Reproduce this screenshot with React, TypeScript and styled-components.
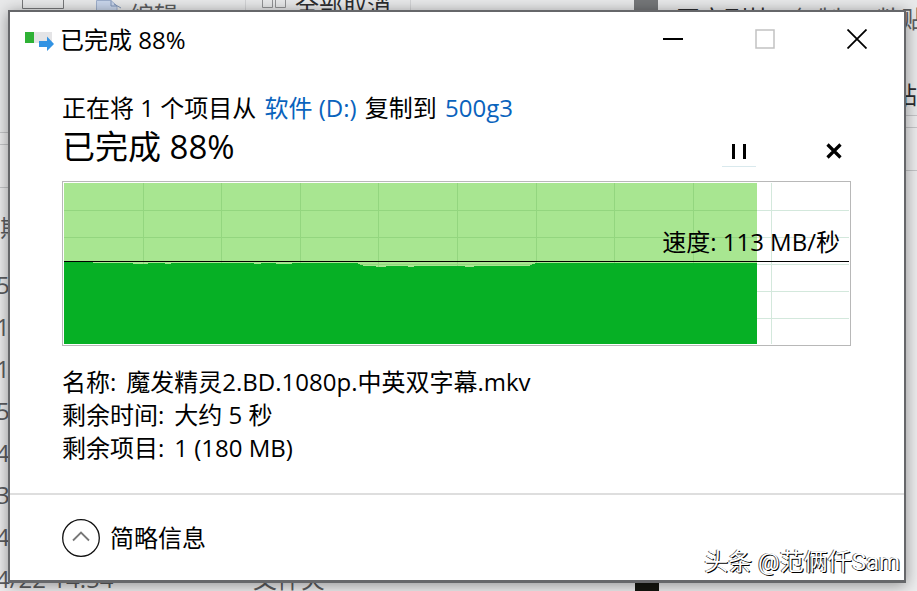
import React from "react";
import styled, { createGlobalStyle } from "styled-components";

const GlobalStyle = createGlobalStyle`
  * { box-sizing: border-box; }
  body {
    margin: 0;
    background: #ececed;
    color: #000;
    font-family: "Open Sans", "Noto Sans CJK SC", sans-serif;
    font-size: 24px;
    line-height: 33px;
  }
`;

const Desktop = styled.div`
  position: relative;
  display: flex;
  min-height: 100vh;
  padding: 10px 11px 8px 8px;
  overflow: hidden;
`;

/* Explorer windows behind the dialog */
const Backdrop = styled.div`
  position: absolute;
  inset: 0;
  display: grid;
  grid-template-columns: 659fr 258fr;
  overflow: hidden;
  color: #5c5d60;
  white-space: nowrap;
`;

const Pane = styled.div`
  display: flex;
  flex-direction: column;
  min-width: 0;
  overflow: hidden;
`;

const Ribbon = styled.div<{ $height: number }>`
  flex: none;
  height: ${(p) => p.$height}px;
  background: #e8e9ea;
  border-bottom: 1px solid #c4c5c7;
  overflow: hidden;
`;

const RibbonRow = styled.div<{ $height?: number }>`
  display: flex;
  align-items: flex-start;
  height: ${(p) => p.$height ?? 78}px;
`;

const Strip = styled.div<{ $height: number }>`
  flex: none;
  height: ${(p) => p.$height}px;
  border-bottom: 1px solid #c4c5c7;
`;

const RibbonGroup = styled.div<{ $start: number; $lift?: number; $dark?: boolean }>`
  display: flex;
  flex: none;
  align-items: flex-start;
  gap: 8px;
  padding-left: ${(p) => p.$start}px;
  margin-top: ${(p) => p.$lift ?? 0}px;
  color: ${(p) => (p.$dark ? "#2c2d2f" : "#5c5d60")};
`;

const RibbonDivider = styled.div<{ $gap: number }>`
  flex: none;
  width: 1px;
  height: 100%;
  margin-left: ${(p) => p.$gap}px;
  background: #d2d3d5;
`;

const RibbonIcon = styled.svg`
  display: block;
  flex: none;
`;

const Files = styled.div`
  display: flex;
  flex-direction: column;
  padding-top: 21px;
`;

const FileRow = styled.div`
  display: grid;
  grid-template-columns: 253fr 382fr 24fr;
  height: 42px;
  line-height: 42px;
`;

const FileDate = styled.span`
  margin-left: -4px;
`;

const ColumnHead = styled.div`
  height: 55px;
  line-height: 38px;
`;

const Thumb = styled.div<{ $dark?: boolean }>`
  width: 24px;
  height: 42px;
  background: ${(p) => (p.$dark ? "#14150f" : "#757779")};
`;

/* Copy dialog */
const Dialog = styled.section`
  position: relative;
  display: flex;
  flex: 1;
  flex-direction: column;
  min-width: 0;
  background: #fff;
  border: 2px solid #66676a;
  border-bottom-width: 3px;
  box-shadow: 0 2px 14px rgba(0, 0, 0, 0.4);
`;

const TitleBar = styled.header`
  display: flex;
  align-items: center;
  height: 54px;
  padding: 0 1px 0 14px;
`;

const Title = styled.span`
  flex: 1;
  padding-left: 5px;
`;

const CaptionButton = styled.button`
  display: grid;
  place-items: center;
  width: 92px;
  height: 54px;
  padding: 0;
  border: 0;
  background: none;
  color: #000;
  &:disabled { color: #c2c2c2; }
`;

const Main = styled.main`
  flex: 1;
  padding: 25px 53px 28px 52px;
`;

const Summary = styled.p`
  margin: 0;
`;

const Place = styled.a`
  margin: 0 2px;
  color: #0a63bd;
  text-decoration: none;
`;

const StatusRow = styled.div`
  display: flex;
  align-items: flex-end;
  gap: 61px;
  padding-bottom: 11px;
`;

const Status = styled.h1`
  flex: 1;
  margin: 0;
  font-size: 33px;
  font-weight: 400;
  line-height: 46px;
`;

const ActionButton = styled.button<{ $focused?: boolean }>`
  display: grid;
  place-items: center;
  width: 34px;
  height: 32px;
  margin-bottom: 3px;
  padding: 0;
  border: 0;
  border-bottom: 1px solid ${(p) => (p.$focused ? "#d9e9ed" : "transparent")};
  background: none;
  color: #000;
`;

const ChartFrame = styled.div`
  position: relative;
  padding: 1px;
  border: 1px solid #b8b8b8;
`;

const Chart = styled.svg`
  display: block;
  width: 100%;
  height: 161px;
`;

const Speed = styled.div`
  position: absolute;
  right: 10px;
  top: 43px;
`;

const Details = styled.dl`
  margin: 19px 0 0;
`;

const Detail = styled.div`
  display: flex;
  gap: 10px;
`;

const Term = styled.dt``;

const Value = styled.dd`
  margin: 0;
`;

const Footer = styled.footer`
  display: flex;
  align-items: center;
  height: 87px;
  padding: 0 52px;
  border-top: 2px solid #dedede;
`;

const Toggle = styled.button`
  display: flex;
  align-items: center;
  gap: 10px;
  padding: 0;
  border: 0;
  background: none;
  color: #000;
  font: inherit;
`;

const Watermark = styled.div`
  position: absolute;
  right: 4px;
  bottom: 1px;
  color: #fff;
  font-family: Roboto, "Noto Sans CJK SC", sans-serif;
  text-shadow: 1px 1px 0 #000, -1px 0 0 #555;
`;

const columns = Array.from({ length: 9 }, (_, i) => Math.round((i + 1) * 78.6));
const rows = [27, 54, 81, 108, 135];
const dates = ["5", "1", "1", "5", "4", "3", "4"];
const progress = 693;

function SpeedChart() {
  return (
    <Chart viewBox="0 0 785 161" preserveAspectRatio="none" aria-hidden="true" shapeRendering="crispEdges">
      <rect width={progress} height="161" fill="#a8e691" />
      {columns.map((x) => (
        <rect key={x} x={x} width="1" height="161" fill={x < progress ? "#93d67f" : "#d3e8dc"} />
      ))}
      {rows.map((y) => (
        <g key={y}>
          <rect x="0" y={y} width={progress} height="1" fill="#93d67f" />
          <rect x={progress} y={y} width="92" height="1" fill="#d3e8dc" />
        </g>
      ))}
      <path
        fill="#06b025"
        d="M0 79H29V80H69V81H84V80H101V81H107V80H190V81H197V80H212V81H228V80H293L300 83H312V84H322V83H344V84H350V83H401V84H410V83H465L472 80H693V161H0Z"
      />
      <rect y="78" width="785" height="1" fill="#000" />
    </Chart>
  );
}

export default function App() {
  return (
    <>
      <GlobalStyle />
      <Desktop>
        <Backdrop aria-hidden="true">
          <Pane>
            <Ribbon $height={133}>
              <RibbonRow $height={132}>
                <RibbonGroup $start={22}>
                  <RibbonIcon width="42" height="9" viewBox="0 0 42 9">
                    <path d="M.5 0V8.500H41.500V0" fill="none" stroke="#77787a" />
                  </RibbonIcon>
                </RibbonGroup>
                <RibbonGroup $start={32} $lift={-2}>
                  <RibbonIcon width="26" height="14" viewBox="0 0 26 14">
                    <path d="M.5 14V2.500H15L21 8V14" fill="#c9d6ec" stroke="#9eafcc" />
                    <path d="M15 2.500V8H21M18 6L25 10" fill="none" stroke="#8297b9" />
                  </RibbonIcon>
                  <span>编辑</span>
                </RibbonGroup>
                <RibbonDivider $gap={67} />
                <RibbonGroup $start={16} $lift={-11} $dark>
                  <RibbonIcon width="25" height="19" viewBox="0 0 25 19">
                    <path d="M.5 8V18.500H10.500V8M13.500 8V18.500H23.500V8" fill="none" stroke="#929395" />
                  </RibbonIcon>
                  <span>全部取消</span>
                </RibbonGroup>
                <RibbonDivider $gap={19} />
                <RibbonGroup $start={223}>
                  <Thumb />
                </RibbonGroup>
              </RibbonRow>
            </Ribbon>
            <Strip $height={12} />
            <Strip $height={43} />
            <Files>
              <ColumnHead>期</ColumnHead>
              {dates.map((date, i) => (
                <FileRow key={i}>
                  <FileDate>{date}</FileDate>
                </FileRow>
              ))}
              <FileRow>
                <FileDate>4/22 14:54</FileDate>
                <span>文件夹</span>
                <Thumb $dark />
              </FileRow>
            </Files>
          </Pane>
          <Pane>
            <Ribbon $height={116}>
              <RibbonRow>
                <RibbonGroup $start={17} $lift={2} $dark>
                  <span>固定到快</span>
                </RibbonGroup>
                <RibbonGroup $start={21} $lift={2}>
                  <span>复制</span>
                </RibbonGroup>
                <RibbonGroup $start={36} $lift={2}>
                  <span>粘贴</span>
                </RibbonGroup>
              </RibbonRow>
              <RibbonRow>
                <RibbonGroup $start={234} $dark>
                  <span>贴</span>
                </RibbonGroup>
              </RibbonRow>
            </Ribbon>
            <Strip $height={12} />
            <Strip $height={43} />
          </Pane>
        </Backdrop>

        <Dialog aria-label="已完成 88%">
          <TitleBar>
            <svg width="31" height="24" viewBox="0 0 31 24" aria-hidden="true">
              <rect x="1" y="5" width="27" height="11" fill="#e4e4e6" />
              <rect x="1" y="5" width="9" height="11" fill="#2eb135" />
              <path d="M15 14H23V9.500L30 17L23 24V20H15Z" fill="#3293e3" />
            </svg>
            <Title>已完成 88%</Title>
            <CaptionButton type="button" aria-label="最小化">
              <svg width="20" height="20" viewBox="0 0 20 20">
                <path d="M0 10H20" stroke="currentColor" strokeWidth="2" />
              </svg>
            </CaptionButton>
            <CaptionButton type="button" aria-label="最大化" disabled>
              <svg width="20" height="20" viewBox="0 0 20 20">
                <rect x="1" y="1" width="18" height="18" fill="none" stroke="currentColor" strokeWidth="1.500" />
              </svg>
            </CaptionButton>
            <CaptionButton type="button" aria-label="关闭">
              <svg width="20" height="20" viewBox="0 0 20 20">
                <path d="M.5.5L19.500 19.500M19.500.5L.5 19.500" stroke="currentColor" strokeWidth="1.800" />
              </svg>
            </CaptionButton>
          </TitleBar>

          <Main>
            <Summary>
              正在将 1 个项目从 <Place href="#source">软件 (D:)</Place> 复制到 <Place href="#target">500g3</Place>
            </Summary>
            <StatusRow>
              <Status>已完成 88%</Status>
              <ActionButton type="button" aria-label="暂停" $focused>
                <svg width="16" height="16" viewBox="0 0 16 16">
                  <path d="M2.500 1V16M13.500 1V16" stroke="currentColor" strokeWidth="3" />
                </svg>
              </ActionButton>
              <ActionButton type="button" aria-label="取消">
                <svg width="16" height="16" viewBox="0 0 16 16">
                  <path d="M1.500 1.500L14.500 14.500M14.500 1.500L1.500 14.500" stroke="currentColor" strokeWidth="3.200" />
                </svg>
              </ActionButton>
            </StatusRow>
            <ChartFrame>
              <SpeedChart />
              <Speed>速度: 113 MB/秒</Speed>
            </ChartFrame>
            <Details>
              <Detail>
                <Term>名称:</Term>
                <Value>魔发精灵2.BD.1080p.中英双字幕.mkv</Value>
              </Detail>
              <Detail>
                <Term>剩余时间:</Term>
                <Value>大约 5 秒</Value>
              </Detail>
              <Detail>
                <Term>剩余项目:</Term>
                <Value>1 (180 MB)</Value>
              </Detail>
            </Details>
          </Main>

          <Footer>
            <Toggle type="button" aria-expanded="true">
              <svg width="38" height="38" viewBox="0 0 38 38" aria-hidden="true">
                <circle cx="19" cy="19" r="18.300" fill="none" stroke="#111" strokeWidth="1.300" />
                <path d="M11 21.500L19 13.500L27 21.500" fill="none" stroke="#777" strokeWidth="1.800" />
              </svg>
              <span>简略信息</span>
            </Toggle>
          </Footer>
          <Watermark>头条 @范俩仟Sam</Watermark>
        </Dialog>
      </Desktop>
    </>
  );
}
